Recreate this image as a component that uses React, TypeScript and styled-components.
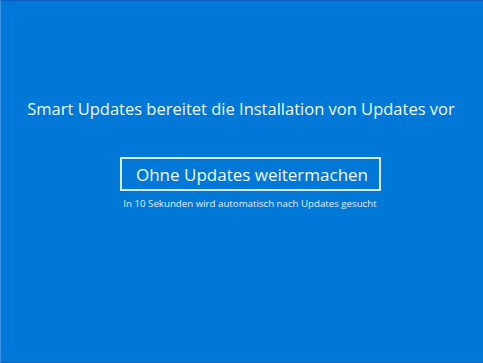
import React from "react";
import styled, { createGlobalStyle } from "styled-components";

const Global = createGlobalStyle`
  html, body { margin: 0; padding: 0; }
  body { background: #0078d7; font-family: "Open Sans", "Noto Sans", sans-serif; }
`;

const Screen = styled.div`
  box-sizing: border-box;
  width: 483px;
  height: 363px;
  background: #0078d7;
  border-top: 1px solid #0a5ec2;
  border-left: 1px solid #3d92e6;
  border-bottom: 1px solid #1466b8;
  display: flex;
  flex-direction: column;
  align-items: center;
  padding-top: 96px;
  color: #ffffff;
`;

const Title = styled.div`
  font-size: 16.5px;
  line-height: 24px;
  color: #f2f7fd;
  white-space: nowrap;
  margin-left: -2px;
`;

const ActionGroup = styled.div`
  display: flex;
  flex-direction: column;
  align-items: center;
  margin-top: 36px;
  margin-left: 16px;
`;

const ActionButton = styled.button`
  box-sizing: border-box;
  width: 261px;
  height: 34px;
  background: transparent;
  border: 2px solid rgba(255, 255, 255, 0.85);
  color: #f4f8fd;
  font-family: inherit;
  font-size: 17px;
  padding: 0 0 0 4px;
  display: flex;
  align-items: center;
  justify-content: center;
`;

const Hint = styled.div`
  margin-top: 7px;
  font-size: 9.7px;
  line-height: 12px;
  color: #e3eefa;
  white-space: nowrap;
`;

export default function App() {
  return (
    <>
      <Global />
      <Screen>
        <Title>Smart Updates bereitet die Installation von Updates vor</Title>
        <ActionGroup>
          <ActionButton>Ohne Updates weitermachen</ActionButton>
          <Hint>In 10 Sekunden wird automatisch nach Updates gesucht</Hint>
        </ActionGroup>
      </Screen>
    </>
  );
}
